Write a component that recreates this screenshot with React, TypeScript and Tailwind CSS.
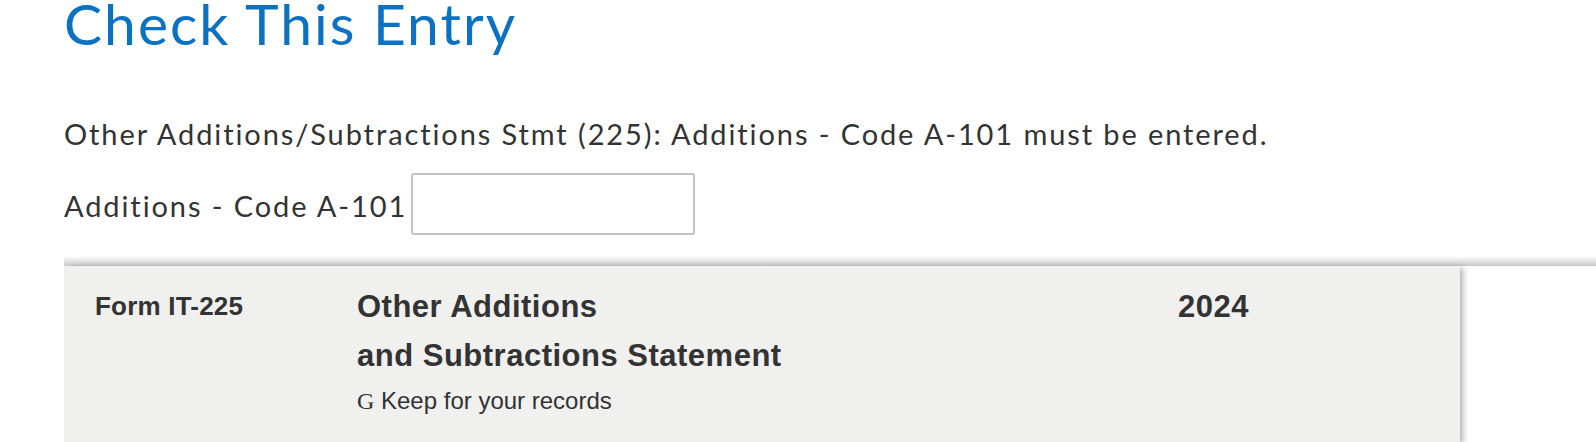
import React from "react";

const App = () => {
    return (
        <div className="w-[1596px] h-[442px] overflow-hidden bg-white font-['Lato',sans-serif] text-[#333]">
            <div className="pl-16">
                <h1 className="text-[57px] leading-[46px] tracking-[2px] text-[#0b72c3] font-normal">
                    Check This Entry
                </h1>
                <p className="mt-[68px] text-[29px] leading-[40px] tracking-[1.9px]">
                    Other Additions/Subtractions Stmt (225): Additions - Code A-101 must be entered.
                </p>
                <div className="mt-[19px] flex items-start">
                    <label className="mt-[13px] text-[29px] leading-[40px] tracking-[1.9px]">
                        Additions - Code A-101
                    </label>
                    <input
                        type="text"
                        className="ml-[4px] w-[284px] h-[62px] rounded-[3px] border-2 border-[#c2c2c2] bg-white outline-none"
                    />
                </div>
            </div>
            <div className="ml-16 mt-[21px]">
                <div className="h-[10px] bg-gradient-to-b from-white to-[#c8c8c8]" />
                <div className="w-[1396px] h-[180px] bg-[#f0f0ef] shadow-[5px_0_6px_-2px_rgba(0,0,0,0.3)] pl-[31px] pt-[16px] font-['Liberation_Sans',Arial,sans-serif] text-[#333] grid grid-cols-[262px_821px_1fr] items-start">
                    <div className="text-[26px] leading-[49px] tracking-[0.2px] font-bold">Form IT-225</div>
                    <div>
                        <div className="text-[31px] leading-[49px] tracking-[0.5px] font-bold">
                            Other Additions
                            <br />
                            and Subtractions Statement
                        </div>
                        <div className="mt-[5px] text-[24px] leading-[32px]">
                            <span className="font-['Liberation_Serif',serif]">G</span> Keep for your records
                        </div>
                    </div>
                    <div className="text-[31px] leading-[49px] tracking-[0.5px] font-bold">2024</div>
                </div>
            </div>
        </div>
    );
};

export default App;
